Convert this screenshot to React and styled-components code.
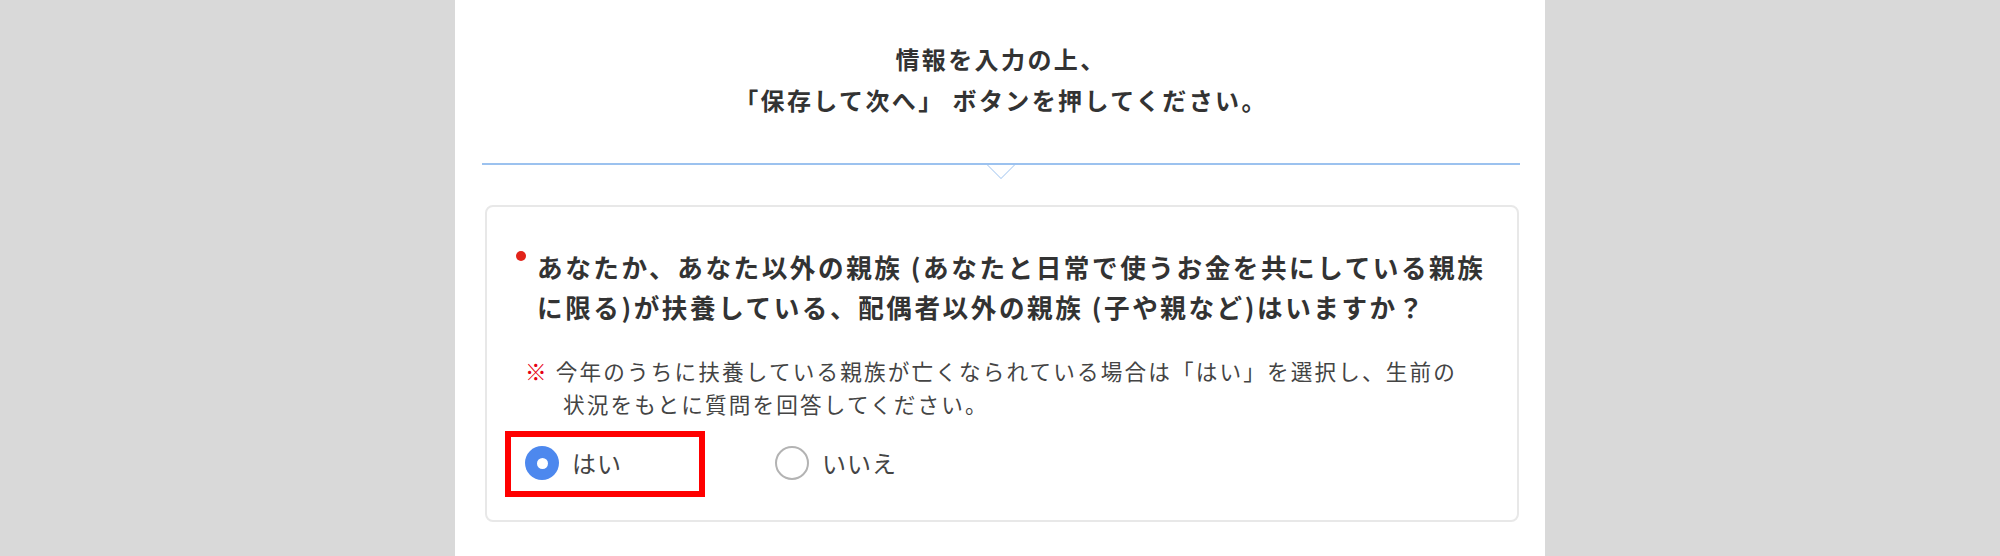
import React from "react";
import styled, { createGlobalStyle } from "styled-components";

const GlobalStyle = createGlobalStyle`
  html, body {
    margin: 0;
    padding: 0;
    background: #d9d9d9;
  }
  body {
    font-family: "Noto Sans CJK JP", "Noto Sans", sans-serif;
    color: #333;
    text-spacing-trim: space-all;
  }
`;

const Page = styled.div`
  display: flex;
  justify-content: center;
  min-height: 556px;
`;

const Panel = styled.main`
  box-sizing: border-box;
  width: 1090px;
  min-height: 556px;
  background: #fff;
  padding: 38px 25px 0 27px;
`;

const Title = styled.h1`
  margin: 0;
  text-align: center;
  font-size: 24px;
  font-weight: 700;
  line-height: 41px;
  letter-spacing: 0.1em;
  color: #333;
`;

const Divider = styled.div`
  position: relative;
  height: 2px;
  margin-top: 43px;
  background: #9cc2ef;

  &::before,
  &::after {
    content: "";
    position: absolute;
    left: 50%;
    width: 0;
    height: 0;
    border-style: solid;
    border-color: transparent;
  }
  &::before {
    top: 0;
    margin-left: -16px;
    border-width: 16px 16px 0 16px;
    border-top-color: #9cc2ef;
  }
  &::after {
    top: 2px;
    margin-left: -13px;
    border-width: 13px 13px 0 13px;
    border-top-color: #fff;
  }
`;

const Card = styled.section`
  margin: 40px 1px 0 3px;
  border: 2px solid #e8e8e8;
  border-radius: 8px;
  padding: 40px 20px 37px 38px;
`;

const Question = styled.p`
  position: relative;
  margin: 0;
  padding-left: 12px;
  font-size: 25.6px;
  font-weight: 700;
  line-height: 40px;
  letter-spacing: 0.1em;
  color: #333;
  white-space: nowrap;

  &::before {
    content: "";
    position: absolute;
    left: -9px;
    top: 4px;
    width: 10px;
    height: 10px;
    border-radius: 50%;
    background: #e2231a;
  }
`;

const Note = styled.p`
  margin: 27px 0 0;
  padding-left: 38px;
  text-indent: -38px;
  font-size: 21.6px;
  line-height: 33px;
  letter-spacing: 0.1em;
  color: #444;
  white-space: nowrap;
`;

const Mark = styled.span`
  color: #e60012;
`;

const RadioRow = styled.div`
  display: flex;
  align-items: center;
  margin-top: 23px;
`;

const Option = styled.label`
  position: relative;
  display: flex;
  align-items: center;
  gap: 13px;
  width: 250px;
  height: 40px;
  cursor: pointer;
`;

const Circle = styled.span`
  box-sizing: border-box;
  width: 34px;
  height: 34px;
  border-radius: 50%;
  display: flex;
  align-items: center;
  justify-content: center;
  background: ${(p) => (p.$checked ? "#4d88ee" : "#fff")};
  border: ${(p) => (p.$checked ? "none" : "2px solid #b3b3b3")};

  &::after {
    content: "";
    display: ${(p) => (p.$checked ? "block" : "none")};
    width: 11px;
    height: 11px;
    border-radius: 50%;
    background: #fff;
  }
`;

const Label = styled.span`
  font-size: 24px;
  line-height: 40px;
  letter-spacing: 1px;
  color: #444;
`;

const Highlight = styled.span`
  position: absolute;
  left: -20px;
  top: -12px;
  width: 200px;
  height: 66px;
  box-sizing: border-box;
  border: 6px solid #ff0000;
  pointer-events: none;
`;

function Radio({ checked, label, highlighted }) {
  return (
    <Option>
      <Circle $checked={checked} />
      <Label>{label}</Label>
      {highlighted && <Highlight />}
    </Option>
  );
}

export default function App() {
  return (
    <>
      <GlobalStyle />
      <Page>
        <Panel>
          <Title>
            情報を入力の上、
            <br />
            「保存して次へ」 ボタンを押してください。
          </Title>
          <Divider />
          <Card>
            <Question>
              あなたか、あなた以外の親族 (あなたと日常で使うお金を共にしている親族
              <br />
              に限る)が扶養している、配偶者以外の親族 (子や親など)はいますか？
            </Question>
            <Note>
              <Mark>※</Mark> 今年のうちに扶養している親族が亡くなられている場合は「はい」を選択し、生前の
              <br />
              状況をもとに質問を回答してください。
            </Note>
            <RadioRow>
              <Radio checked label="はい" highlighted />
              <Radio label="いいえ" />
            </RadioRow>
          </Card>
        </Panel>
      </Page>
    </>
  );
}
